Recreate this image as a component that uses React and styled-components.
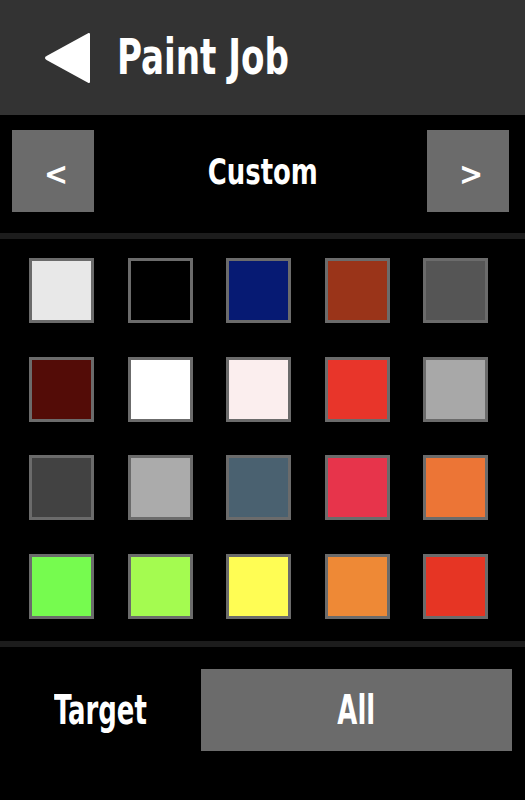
import React from "react";
import styled, { createGlobalStyle } from "styled-components";

const GlobalStyle = createGlobalStyle`
  body {
    margin: 0;
    background: #000;
    font-family: "DejaVu Sans Condensed", "DejaVu Sans", sans-serif;
  }
`;

const Screen = styled.div`
  width: 525px;
  height: 800px;
  background: #000;
  color: #fff;
  display: flex;
  flex-direction: column;
  overflow: hidden;
  font-weight: 700;
`;

const Header = styled.div`
  height: 115px;
  background: #333333;
  display: flex;
  align-items: center;
  padding-left: 44px;
  gap: 27px;
  box-sizing: border-box;
`;

const Title = styled.h1`
  margin: 0;
  font-size: 49px;
  font-weight: 700;
  line-height: 1;
  color: #fff;
`;

const NavRow = styled.div`
  height: 118px;
  display: flex;
  align-items: flex-start;
  justify-content: space-between;
  padding: 15px 16px 0 12px;
  box-sizing: border-box;
`;

const NavButton = styled.button`
  width: 82px;
  height: 82px;
  border: none;
  background: #6b6b6b;
  color: #fff;
  font-family: inherit;
  font-size: 32px;
  font-weight: 700;
  padding: 6px 0 0 6px;
  display: flex;
  align-items: center;
  justify-content: center;
`;

const NavLabel = styled.div`
  margin: 21px 0 0 4px;
  font-size: 36px;
`;

const Divider = styled.div`
  height: 6px;
  background: #1c1c1c;
  flex-shrink: 0;
`;

const Palette = styled.div`
  display: grid;
  grid-template-columns: repeat(5, 65px);
  column-gap: 33.5px;
  row-gap: 33.5px;
  padding: 19px 0 22px 29px;
`;

const Swatch = styled.div`
  width: 65px;
  height: 65px;
  box-sizing: border-box;
  border: 3px solid #6b6b6b;
  background: ${(p) => p.color};
`;

const Footer = styled.div`
  display: flex;
  align-items: center;
  padding-top: 22px;
`;

const FooterLabel = styled.div`
  width: 201px;
  text-align: center;
  font-size: 40px;
`;

const Narrow = styled.span`
  display: inline-block;
  transform: scaleX(${(p) => p.$scale || 0.76});
  transform-origin: ${(p) => p.$origin || "center"};
`;

const TargetButton = styled.button`
  width: 311px;
  height: 82px;
  border: none;
  background: #6b6b6b;
  color: #fff;
  font-family: inherit;
  font-size: 40px;
  font-weight: 700;
`;

const colors = [
  "#e8e8e8", "#000000", "#061a73", "#9a3419", "#555555",
  "#530c07", "#ffffff", "#fbeeee", "#e8352a", "#a8a8a8",
  "#424242", "#ababab", "#4a6170", "#e7344b", "#ec7536",
  "#76fb4f", "#a4fb50", "#fffd54", "#ee8936", "#e63524",
];

function BackArrow() {
  return (
    <svg width="46" height="52" viewBox="0 0 46 52">
      <path d="M45 2 L45 50 L3 27 Q1 26 3 25 Z" fill="#fff" stroke="#fff" strokeWidth="2" strokeLinejoin="round" />
    </svg>
  );
}

export default function App() {
  return (
    <Screen>
      <GlobalStyle />
      <Header>
        <BackArrow />
        <Title><Narrow $scale={0.775} $origin="left">Paint Job</Narrow></Title>
      </Header>
      <NavRow>
        <NavButton>&lt;</NavButton>
        <NavLabel><Narrow $scale={0.8}>Custom</Narrow></NavLabel>
        <NavButton>&gt;</NavButton>
      </NavRow>
      <Divider />
      <Palette>
        {colors.map((c, i) => (
          <Swatch key={i} color={c} />
        ))}
      </Palette>
      <Divider />
      <Footer>
        <FooterLabel><Narrow $scale={0.72}>Target</Narrow></FooterLabel>
        <TargetButton><Narrow $scale={0.72}>All</Narrow></TargetButton>
      </Footer>
    </Screen>
  );
}
